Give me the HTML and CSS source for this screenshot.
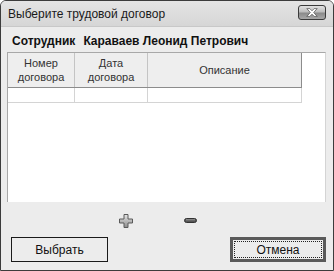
FILE: index.html
```html
<!DOCTYPE html>
<html lang="ru">
<head>
  <meta charset="UTF-8">
  <title>Выберите трудовой договор</title>
  <link rel="stylesheet" href="styles.css">
</head>
<body>

  <div class="window">
    <div class="titlebar">
      <span class="title">Выберите трудовой договор</span>
      <button class="close" title="Закрыть">
        <svg width="12" height="9" viewBox="0 0 12 9">
          <path d="M0.8 0.6 L3.8 0.6 L6 2.8 L8.2 0.6 L11.2 0.6 L7.7 4.5 L11.2 8.4 L8.2 8.4 L6 6.2 L3.8 8.4 L0.8 8.4 L4.3 4.5 Z"
                fill="#fff" stroke="#4a4a4a" stroke-width="0.7" stroke-linejoin="round"/>
        </svg>
      </button>
    </div>

    <div class="contenido">
      <div class="empleado">
        <span>Сотрудник</span>
        <span>Караваев Леонид Петрович</span>
      </div>

      <div class="grilla">
        <table>
          <thead>
            <tr>
              <th class="col-num">Номер<br>договора</th>
              <th class="col-fecha">Дата<br>договора</th>
              <th class="col-desc">Описание</th>
            </tr>
          </thead>
          <tbody>
            <tr>
              <td></td>
              <td></td>
              <td></td>
            </tr>
          </tbody>
        </table>
      </div>

      <div class="herramientas">
        <span class="herramienta mas" title="Добавить">
          <svg width="14" height="14" viewBox="0 0 14 14">
            <defs>
              <linearGradient id="gris" x1="0" y1="0" x2="0" y2="1">
                <stop offset="0" stop-color="#e6e6e6"/>
                <stop offset="1" stop-color="#8c8c8c"/>
              </linearGradient>
            </defs>
            <path d="M5 0.5 H9 V5 H13.5 V9 H9 V13.5 H5 V9 H0.5 V5 H5 Z"
                  fill="url(#gris)" stroke="#5a5a5a" stroke-width="1"/>
          </svg>
        </span>
        <span class="herramienta menos" title="Удалить">
          <svg width="13" height="5" viewBox="0 0 13 5">
            <rect x="0.5" y="0.5" width="12" height="4" rx="2" fill="#555" stroke="#333" stroke-width="1"/>
            <rect x="2" y="1.3" width="9" height="1" fill="#999"/>
          </svg>
        </span>
      </div>

      <div class="acciones">
        <button class="boton">Выбрать</button>
        <button class="boton cancelar"><span>Отмена</span></button>
      </div>
    </div>
  </div>

</body>
</html>
```

FILE: styles.css
```css
body {
  margin: 0;
  background: #ffffff;
  font-family: "Liberation Sans", Arial, sans-serif;
}

.window {
  width: 334px;
  height: 271px;
  box-sizing: border-box;
  border: 1px solid #3c3c3c;
  border-radius: 6px 6px 0 0;
  background: #ececec;
  display: flex;
  flex-direction: column;
  overflow: hidden;
}

.titlebar {
  height: 26px;
  flex: none;
  display: flex;
  align-items: center;
  justify-content: space-between;
  padding: 0 7px 0 7px;
  background: linear-gradient(#e4e4e4, #d6d6d6);
  border-bottom: 1px solid #c8c8c8;
  box-sizing: border-box;
}

.title {
  font-size: 12px;
  color: #1a1a1a;
  margin-top: 1px;
}

.close {
  width: 28px;
  height: 15px;
  padding: 0;
  margin-top: -2px;
  border: 1px solid #3a3a3a;
  border-radius: 3px;
  background: linear-gradient(#e2e2e2 0%, #bdbdbd 45%, #8a8a8a 55%, #a8a8a8 100%);
  display: flex;
  align-items: center;
  justify-content: center;
}

.contenido {
  flex: 1;
  display: flex;
  flex-direction: column;
  padding: 0 7px 8px 6px;
  border-left: 3px solid #e2e2e2;
  border-right: 3px solid #e2e2e2;
  margin: 0 -3px;
}

.empleado {
  height: 25px;
  flex: none;
  display: flex;
  gap: 8px;
  align-items: center;
  padding: 2px 0 0 5px;
  box-sizing: border-box;
  font-size: 12px;
  font-weight: bold;
  color: #111;
}

.grilla {
  height: 150px;
  flex: none;
  box-sizing: border-box;
  background: white;
  border-top: 1px solid #a8a8a8;
  border-left: 1px solid #a8a8a8;
  border-right: 1px solid #d4d4d4;
}

table {
  border-collapse: collapse;
  font-size: 11px;
}

th {
  height: 34px;
  padding: 0;
  font-weight: normal;
  color: #333;
  line-height: 14px;
  background: #eeeeee;
  border-right: 1px solid #c4c4c4;
  border-bottom: 1px solid #8c8c8c;
}

th.col-desc {
  border-right-color: #8c8c8c;
}

.col-num {
  width: 66px;
}

.col-fecha {
  width: 72px;
}

.col-desc {
  width: 153px;
}

td {
  height: 14px;
  padding: 0;
  border-right: 1px solid #d4d4d4;
  border-bottom: 1px solid #d4d4d4;
}

.herramientas {
  height: 35px;
  flex: none;
  display: flex;
  align-items: center;
  padding-left: 112px;
}

.herramienta {
  display: flex;
  margin-top: 2px;
}

.menos {
  margin-left: 51px;
}

.acciones {
  height: 25px;
  flex: none;
  display: flex;
  justify-content: space-between;
  padding: 0 0 0 4px;
}

.boton {
  width: 97px;
  height: 25px;
  box-sizing: border-box;
  border: 1px solid #1a1a1a;
  background: #ececec;
  font-family: "Liberation Sans", Arial, sans-serif;
  font-size: 12px;
  color: #111;
  padding: 0;
}

.boton.cancelar {
  width: 96px;
  border: 3px solid #5a5a5a;
  padding: 1px;
  display: flex;
}

.boton.cancelar span {
  flex: 1;
  display: flex;
  align-items: center;
  justify-content: center;
  border: 1px dotted #222;
}
```
